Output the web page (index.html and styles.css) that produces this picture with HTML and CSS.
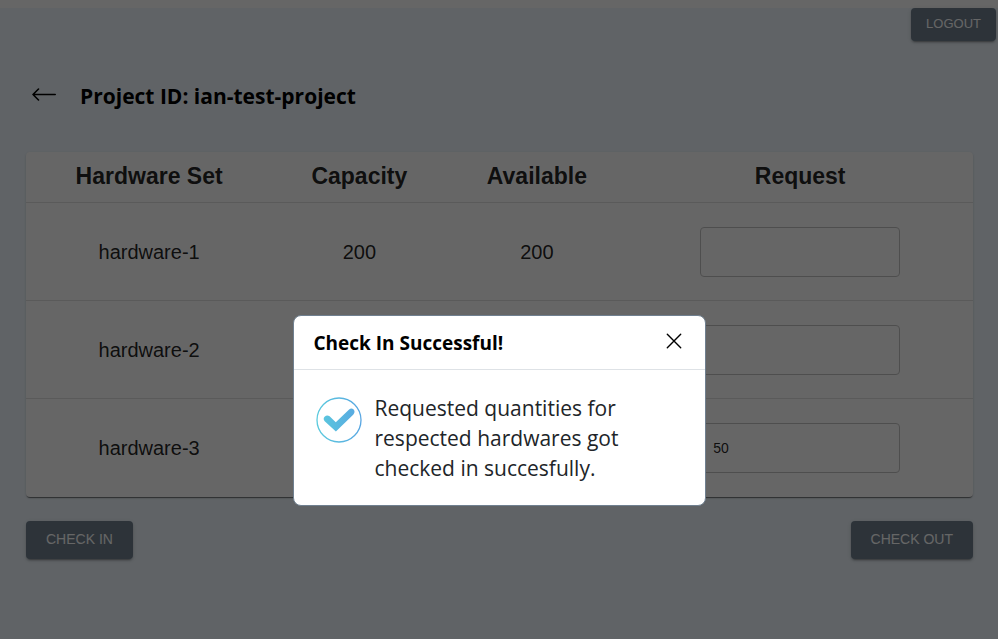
FILE: index.html
```html
<!DOCTYPE html>
<html lang="en">
<head>
<meta charset="utf-8">
<meta name="viewport" content="width=device-width, initial-scale=1">
<title>Project hardware</title>
<link rel="stylesheet" href="styles.css">
</head>
<body>
<div class="page">
  <header class="topbar">
    <button class="button button-small" type="button">LOGOUT</button>
  </header>
  <main class="content">
    <div class="heading">
      <a class="back" href="#" aria-label="Back">
        <svg width="24" height="14" viewBox="0 0 24 14" fill="none" stroke="#000" stroke-width="1.6" stroke-linecap="round" stroke-linejoin="round"><path d="M23.2 6.5H1M6.5 1L1 6.5L6.5 12"/></svg>
      </a>
      <h1 class="title">Project ID: ian-test-project</h1>
    </div>
    <table class="hardware">
      <thead>
        <tr><th class="col-name">Hardware Set</th><th class="col-capacity">Capacity</th><th class="col-available">Available</th><th>Request</th></tr>
      </thead>
      <tbody>
        <tr><td>hardware-1</td><td>200</td><td>200</td><td><input class="quantity" type="text" aria-label="Request hardware-1"></td></tr>
        <tr><td>hardware-2</td><td></td><td></td><td><input class="quantity" type="text" aria-label="Request hardware-2"></td></tr>
        <tr><td>hardware-3</td><td></td><td></td><td><input class="quantity" type="text" value="50" aria-label="Request hardware-3"></td></tr>
      </tbody>
    </table>
    <div class="actions">
      <button class="button" type="button">CHECK IN</button>
      <button class="button" type="button">CHECK OUT</button>
    </div>
  </main>
</div>
<div class="overlay">
  <section class="modal" role="dialog" aria-modal="true" aria-labelledby="modal-title">
    <div class="modal-header">
      <h2 class="modal-title" id="modal-title">Check In Successful!</h2>
      <button class="close" type="button" aria-label="Close">
        <svg width="16" height="16" viewBox="0 0 16 16" fill="none" stroke="#000" stroke-width="1.4" stroke-linecap="round"><path d="M1.3 1.3L14.7 14.7M14.7 1.3L1.3 14.7"/></svg>
      </button>
    </div>
    <div class="modal-body">
      <svg class="check" width="46" height="46" viewBox="0 0 46 46" fill="none" aria-hidden="true">
        <defs><linearGradient id="blue" gradientUnits="userSpaceOnUse" x1="0" y1="24" x2="46" y2="22"><stop offset="0" stop-color="#5bcbdd"/><stop offset="1" stop-color="#58a5e2"/></linearGradient></defs>
        <circle cx="23" cy="23" r="22" stroke="url(#blue)" stroke-width="1.3"/>
        <path fill="url(#blue)" d="M8.6 19.8Q11 17.3 13.6 19.3L19.8 25.2L33.1 12.4Q35.5 10.5 37.7 12.6Q39.5 15 37.4 17.4L19.9 34.4L8.7 24.2Q6.7 22 8.6 19.8Z"/>
      </svg>
      <p class="message">Requested quantities for respected hardwares got checked in succesfully.</p>
    </div>
  </section>
</div>
</body>
</html>
```
FILE: styles.css
```css
* {
  box-sizing: border-box;
}

body {
  margin: 0;
  background: #fff;
  color: #000;
  font-family: "Liberation Sans", Arial, sans-serif;
}

.page {
  min-height: calc(100vh - 8px);
  margin-top: 8px;
  background: aliceblue;
}

.topbar {
  display: flex;
  justify-content: flex-end;
  padding-right: 2px;
}

.button {
  height: 38px;
  padding: 0 20px 2px;
  border: 0;
  border-radius: 4px;
  background: slategray;
  box-shadow: 0 3px 1px -2px rgba(0, 0, 0, 0.2), 0 2px 2px rgba(0, 0, 0, 0.14), 0 1px 5px rgba(0, 0, 0, 0.12);
  color: #fff;
  font-family: inherit;
  font-size: 14px;
  line-height: 20px;
}

.button-small {
  height: 33px;
  padding: 0 15px 2px;
  font-size: 13px;
}

.content {
  padding: 39px 25px 24px 26px;
}

.heading {
  display: flex;
  align-items: center;
  gap: 24px;
  height: 32px;
  margin: 0 6px 40px;
}

.back {
  display: flex;
  padding-bottom: 2px;
}

.title {
  margin: 0;
  font: 700 21px/32px "Open Sans", sans-serif;
}

.hardware {
  width: 100%;
  border-spacing: 0;
  table-layout: fixed;
  border-radius: 4px;
  background: #fff;
  box-shadow: 0 2px 1px -1px rgba(0, 0, 0, 0.4), 0 1px 1px rgba(0, 0, 0, 0.14), 0 1px 3px rgba(0, 0, 0, 0.12);
  color: rgba(0, 0, 0, 0.87);
  text-align: center;
}

.col-name {
  width: 26%;
}

.col-capacity {
  width: 18.4%;
}

.col-available {
  width: 19.1%;
}

.hardware th {
  height: 51px;
  padding: 0 0 2px;
  border-bottom: 1px solid #e0e0e0;
  font-size: 23px;
  line-height: 32px;
}

.hardware td {
  height: 98px;
  padding: 0;
  border-bottom: 1px solid #e0e0e0;
  font-size: 20px;
  line-height: 28px;
}

.hardware tbody tr:last-child td {
  border-bottom: 0;
}

.quantity {
  display: block;
  width: 200px;
  height: 50px;
  margin: 0 auto;
  padding: 0 12px;
  border: 1px solid #c4c4c4;
  border-radius: 4px;
  background: transparent;
  color: rgba(0, 0, 0, 0.87);
  font-family: inherit;
  font-size: 14px;
}

.actions {
  display: flex;
  justify-content: space-between;
  margin-top: 24px;
}

.overlay {
  position: fixed;
  inset: 0;
  display: flex;
  align-items: flex-start;
  justify-content: center;
  padding: 315px 16px 16px;
  background: rgba(0, 0, 0, 0.6);
}

.modal {
  width: 100%;
  max-width: 413px;
  border: 1px solid slategray;
  border-radius: 8px;
  background: #fff;
  font-family: "Open Sans", sans-serif;
}

.modal-header {
  display: flex;
  align-items: center;
  justify-content: space-between;
  padding: 13px 20px 12px;
  border-bottom: 1px solid #dee2e6;
}

.modal-title {
  margin: 0;
  font-size: 19px;
  font-weight: 700;
  line-height: 28px;
}

.close {
  display: flex;
  padding: 0 3px 4px;
  border: 0;
  background: none;
}

.modal-body {
  display: flex;
  gap: 13px;
  padding: 23px 22px 22px;
}

.check {
  flex: none;
  margin-top: 4px;
}

.message {
  max-width: 272px;
  margin: 0;
  color: #212529;
  font-size: 21px;
  line-height: 30px;
}
```
